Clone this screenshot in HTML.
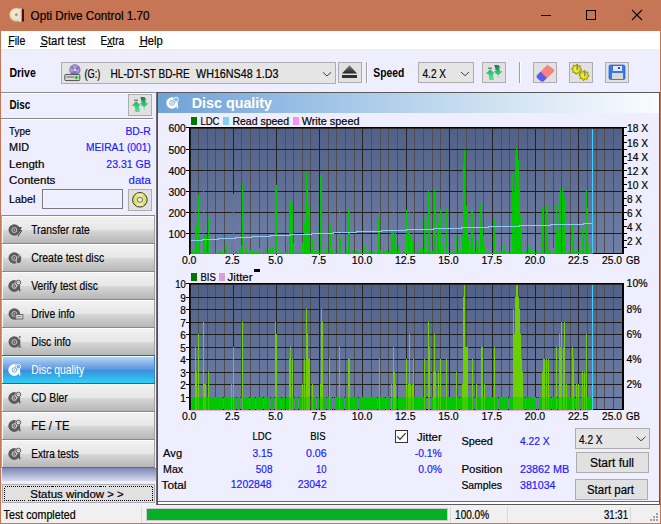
<!DOCTYPE html>
<html><head><meta charset="utf-8"><title>Opti Drive Control 1.70</title>
<style>
html,body{margin:0;padding:0;width:661px;height:524px;overflow:hidden;background:#EFEEFE}
svg{display:block;font-family:"Liberation Sans",sans-serif}
</style></head><body>
<svg width="661" height="524" viewBox="0 0 661 524" shape-rendering="crispEdges">
<rect x="0" y="0" width="661" height="524" fill="#EFEEFE" />
<rect x="0" y="0" width="661" height="31" fill="#C67655" />
<rect x="1" y="31" width="659" height="18" fill="#FFFFFF" />
<rect x="1" y="49" width="659" height="1" fill="#F0F0F0"/>
<rect x="1" y="50" width="659" height="1" fill="#EDEDED"/>
<rect x="0" y="0" width="1" height="524" fill="#C67655"/>
<rect x="660" y="0" width="1" height="524" fill="#C67655"/>
<rect x="0" y="523" width="661" height="1" fill="#C67655"/>
<defs>
<radialGradient id="cdg" cx="0.45" cy="0.45" r="0.6"><stop offset="0" stop-color="#FAF6E0"/><stop offset="0.5" stop-color="#F0E6C0"/><stop offset="1" stop-color="#D8CC98"/></radialGradient>
<radialGradient id="ycd" cx="0.5" cy="0.5" r="0.5"><stop offset="0" stop-color="#F0F0C0"/><stop offset="0.5" stop-color="#E4E480"/><stop offset="1" stop-color="#D4D470"/></radialGradient>
<linearGradient id="hdr" x1="0" y1="0" x2="1" y2="0"><stop offset="0" stop-color="#6FA2D6"/><stop offset="0.35" stop-color="#A2C5E7"/><stop offset="0.65" stop-color="#CCE0F1"/><stop offset="1" stop-color="#FAFCFE"/></linearGradient>
<linearGradient id="plot" x1="0" y1="0" x2="0" y2="1"><stop offset="0" stop-color="#516086"/><stop offset="1" stop-color="#7080A6"/></linearGradient>
<linearGradient id="btnTop" x1="0" y1="0" x2="0" y2="1"><stop offset="0" stop-color="#F2F2F2"/><stop offset="1" stop-color="#E6E6E6"/></linearGradient>
<linearGradient id="btnBot" x1="0" y1="0" x2="0" y2="1"><stop offset="0" stop-color="#D8D8D8"/><stop offset="1" stop-color="#B6B6B6"/></linearGradient>
<linearGradient id="selTop" x1="0" y1="0" x2="0" y2="1"><stop offset="0" stop-color="#B0D4F6"/><stop offset="1" stop-color="#5C92DC"/></linearGradient>
<linearGradient id="selBot" x1="0" y1="0" x2="0" y2="1"><stop offset="0" stop-color="#3C8CDC"/><stop offset="1" stop-color="#2CD2F8"/></linearGradient>
<linearGradient id="navEnd" x1="0" y1="0" x2="0" y2="1"><stop offset="0" stop-color="#7C86B4"/><stop offset="1" stop-color="#D6DAEE"/></linearGradient>
<linearGradient id="ej" x1="0" y1="0" x2="0" y2="1"><stop offset="0" stop-color="#808080"/><stop offset="1" stop-color="#202020"/></linearGradient>
<linearGradient id="garr" x1="0" y1="0" x2="0" y2="1"><stop offset="0" stop-color="#22B060"/><stop offset="1" stop-color="#5AE89A"/></linearGradient><linearGradient id="garr2" x1="0" y1="0" x2="0" y2="1"><stop offset="0" stop-color="#1A7040"/><stop offset="0.6" stop-color="#2AC070"/><stop offset="1" stop-color="#40D080"/></linearGradient>
</defs>
<circle cx="16.3" cy="14.7" r="6.8" fill="url(#cdg)" stroke="#C8B888" stroke-width="0.5" shape-rendering="auto"/>
<circle cx="16.3" cy="14.7" r="1.7" fill="#D07A58" stroke="#D8D8D8" stroke-width="0.9" shape-rendering="auto"/>
<rect x="18.8" y="8.8" width="2.8" height="12.8" rx="1.2" fill="#DADADA" stroke="#F4F4F4" stroke-width="0.5" shape-rendering="auto"/>
<path d="M21.7 10 Q22.8 7.8 23.9 9.5 L24 21.6 L21.7 21.6 Z" fill="#4A0808" shape-rendering="auto"/>
<text x="30.6" y="19.8" font-size="12" fill="#000" stroke="#000" stroke-width="0.2" textLength="119.0" lengthAdjust="spacingAndGlyphs">Opti Drive Control 1.70</text>
<rect x="541" y="15" width="10" height="1" fill="#000"/>
<rect x="586.5" y="10.5" width="9" height="9" fill="none" stroke="#000" stroke-width="1"/>
<path d="M632 10 L642 20 M642 10 L632 20" stroke="#000" stroke-width="1.1" shape-rendering="auto"/>
<text x="8.3" y="44.6" font-size="12" fill="#000" stroke="#000" stroke-width="0.2" textLength="17.0" lengthAdjust="spacingAndGlyphs">File</text>
<rect x="8" y="46" width="6" height="1" fill="#000"/>
<text x="40.5" y="44.6" font-size="12" fill="#000" stroke="#000" stroke-width="0.2" textLength="45.0" lengthAdjust="spacingAndGlyphs">Start test</text>
<rect x="40" y="46" width="7" height="1" fill="#000"/>
<text x="100.5" y="44.6" font-size="12" fill="#000" stroke="#000" stroke-width="0.2" textLength="23.7" lengthAdjust="spacingAndGlyphs">Extra</text>
<rect x="107" y="46" width="6" height="1" fill="#000"/>
<text x="139.7" y="44.6" font-size="12" fill="#000" stroke="#000" stroke-width="0.2" textLength="23.0" lengthAdjust="spacingAndGlyphs">Help</text>
<rect x="139" y="46" width="8" height="1" fill="#000"/>
<text x="9.4" y="76.9" font-size="12" fill="#000" font-weight="bold" textLength="26.4" lengthAdjust="spacingAndGlyphs">Drive</text>
<rect x="61.5" y="62.5" width="274" height="21" fill="#E5E5E5" stroke="#ADADAD"/>
<g shape-rendering="auto"><circle cx="74.9" cy="69.9" r="5.3" fill="#8C74C4" stroke="#6A58A0" stroke-width="0.5"/><path d="M74.9 69.9 L72 65.4 L77.5 65.3 Z M74.9 69.9 L70.5 73 L70 68 Z M74.9 69.9 L79.6 69 L78.4 73.8 Z" fill="#B8A8E0" opacity="0.8"/><circle cx="74.9" cy="69.9" r="1" fill="#F0F0FF"/><rect x="64.8" y="74.4" width="15" height="6.2" rx="1" fill="#D8D8D8" stroke="#404040" stroke-width="0.9"/><rect x="66.5" y="76.2" width="8" height="1.5" fill="#8A8A8A"/><path d="M76.5 75.8 v3.4 M74.8 77.5 h3.4" stroke="#10C020" stroke-width="1.3"/></g>
<text x="84.5" y="78.1" font-size="12" fill="#000" stroke="#000" stroke-width="0.2" textLength="15.9" lengthAdjust="spacingAndGlyphs">(G:)</text>
<text x="110.5" y="78.1" font-size="12" fill="#000" stroke="#000" stroke-width="0.2" textLength="79.3" lengthAdjust="spacingAndGlyphs">HL-DT-ST BD-RE</text>
<text x="196" y="78.1" font-size="12" fill="#000" stroke="#000" stroke-width="0.2" textLength="82.4" lengthAdjust="spacingAndGlyphs">WH16NS48 1.D3</text>
<path d="M322.8 72.2 L327 76 L331.2 72.2" fill="none" stroke="#404040" stroke-width="1" shape-rendering="auto"/>
<rect x="338.5" y="62.5" width="23" height="20" fill="#E1E1E1" stroke="#ADADAD"/>
<path d="M349.5 65.2 L357 73.6 L342 73.6 Z" fill="url(#ej)" shape-rendering="auto"/>
<rect x="342" y="75.3" width="15" height="2.6" fill="#303030" />
<rect x="366" y="62" width="1" height="21" fill="#A0A0A0"/>
<rect x="367" y="62" width="1" height="21" fill="#FFFFFF"/>
<text x="373.3" y="76.8" font-size="12" fill="#000" font-weight="bold" textLength="31.0" lengthAdjust="spacingAndGlyphs">Speed</text>
<rect x="418.5" y="62.5" width="55" height="20" fill="#E5E5E5" stroke="#ADADAD"/>
<text x="422.5" y="77.5" font-size="12" fill="#000" stroke="#000" stroke-width="0.2" textLength="23.5" lengthAdjust="spacingAndGlyphs">4.2 X</text>
<path d="M461 72 L465 75.7 L469 72" fill="none" stroke="#404040" stroke-width="1" shape-rendering="auto"/>
<rect x="482.5" y="62.5" width="23" height="20" fill="#E1E1E1" stroke="#ADADAD"/>
<g transform="translate(482,62)" shape-rendering="auto"><path d="M8.2 7.2 L12.8 11.8 L10.8 11.8 L12 18 L8.2 18 L6.2 11.8 L3.6 11.8 Z" fill="url(#garr)"/><path d="M12.4 3 L16.8 3.2 L18 9.2 L20.4 9.2 L16.2 13.6 L11.6 9.2 L13.8 9.2 Z" fill="url(#garr2)"/><path d="M6 6.2 h4" stroke="#404040" stroke-width="0.9"/><path d="M13.5 3 l0.8 1.6 M17.4 4.2 l0.8 1.6 M15.8 14.6 l0.8 0.6 M7.4 16 l0.8 1.6" stroke="#505050" stroke-width="0.6"/></g>
<rect x="519" y="62" width="1" height="21" fill="#A0A0A0"/>
<rect x="520" y="62" width="1" height="21" fill="#FFFFFF"/>
<rect x="533.5" y="62.5" width="23" height="20" fill="#E1E1E1" stroke="#ADADAD"/>
<path d="M540.5 72 L547.5 65.2 L553.5 69.5 L553.5 71.5 L546.5 78.2 Z" fill="#FF8080" stroke="#D05050" stroke-width="0.4" shape-rendering="auto"/>
<path d="M537 75.5 L540.5 72 L546.5 78.2 L543 81.5 L540 80.5 L537 77.5 Z" fill="#5A5AF8" stroke="#3030B0" stroke-width="0.4" shape-rendering="auto"/>
<rect x="569.5" y="62.5" width="23" height="20" fill="#E1E1E1" stroke="#ADADAD"/>
<polygon points="581.60,69.20 581.50,70.18 579.93,70.58 579.59,71.20 580.14,72.74 579.38,73.36 577.98,72.53 577.30,72.73 576.60,74.20 575.62,74.10 575.22,72.53 574.60,72.19 573.06,72.74 572.44,71.98 573.27,70.58 573.07,69.90 571.60,69.20 571.70,68.22 573.27,67.82 573.61,67.20 573.06,65.66 573.82,65.04 575.22,65.87 575.90,65.67 576.60,64.20 577.58,64.30 577.98,65.87 578.60,66.21 580.14,65.66 580.76,66.42 579.93,67.82 580.13,68.50" fill="#E8E800" stroke="#6A6A00" stroke-width="0.7" shape-rendering="auto"/>
<circle cx="576.6" cy="69.2" r="2.2" fill="#F8F820" shape-rendering="auto"/>
<rect x="576.4" y="65.2" width="1.8" height="5" fill="#8A8A8A" shape-rendering="auto"/>
<polygon points="589.00,75.40 588.90,76.38 587.33,76.78 586.99,77.40 587.54,78.94 586.78,79.56 585.38,78.73 584.70,78.93 584.00,80.40 583.02,80.30 582.62,78.73 582.00,78.39 580.46,78.94 579.84,78.18 580.67,76.78 580.47,76.10 579.00,75.40 579.10,74.42 580.67,74.02 581.01,73.40 580.46,71.86 581.22,71.24 582.62,72.07 583.30,71.87 584.00,70.40 584.98,70.50 585.38,72.07 586.00,72.41 587.54,71.86 588.16,72.62 587.33,74.02 587.53,74.70" fill="#E8E800" stroke="#6A6A00" stroke-width="0.7" shape-rendering="auto"/>
<circle cx="584.0" cy="75.4" r="2.2" fill="#F8F820" shape-rendering="auto"/>
<rect x="583.8" y="71.4" width="1.8" height="5" fill="#8A8A8A" shape-rendering="auto"/>
<rect x="605.5" y="62.5" width="23" height="20" fill="#E1E1E1" stroke="#ADADAD"/>
<rect x="609" y="65" width="16" height="14.5" rx="1.5" fill="#3A78F0" stroke="#1E50C0" stroke-width="0.6" shape-rendering="auto"/>
<rect x="612.5" y="66" width="9" height="5" fill="#E8E8F0" />
<rect x="617.5" y="67" width="2" height="2" fill="#2050D0" />
<rect x="611.5" y="73" width="11" height="5.5" fill="#D8D8D8" />
<rect x="1" y="92" width="155" height="1" fill="#A0A0A0"/>
<rect x="1" y="92" width="152" height="1" fill="#8A8A8A"/>
<rect x="1" y="93" width="152" height="1" fill="#FFFFFF"/>
<text x="9.4" y="109.2" font-size="12" fill="#000" font-weight="bold" textLength="20.8" lengthAdjust="spacingAndGlyphs">Disc</text>
<rect x="128.5" y="94.5" width="23" height="21" fill="#E1E1E1" stroke="#ADADAD"/>
<g transform="translate(128,94)" shape-rendering="auto"><path d="M8.2 7.2 L12.8 11.8 L10.8 11.8 L12 18 L8.2 18 L6.2 11.8 L3.6 11.8 Z" fill="url(#garr)"/><path d="M12.4 3 L16.8 3.2 L18 9.2 L20.4 9.2 L16.2 13.6 L11.6 9.2 L13.8 9.2 Z" fill="url(#garr2)"/><path d="M6 6.2 h4" stroke="#404040" stroke-width="0.9"/><path d="M13.5 3 l0.8 1.6 M17.4 4.2 l0.8 1.6 M15.8 14.6 l0.8 0.6 M7.4 16 l0.8 1.6" stroke="#505050" stroke-width="0.6"/></g>
<rect x="1" y="118" width="152" height="1" fill="#8A8A8A"/>
<rect x="1" y="119" width="152" height="1" fill="#FFFFFF"/>
<text x="9.1" y="134.9" font-size="11.5" fill="#000" stroke="#000" stroke-width="0.2" textLength="21.4" lengthAdjust="spacingAndGlyphs">Type</text>
<text x="125.4" y="134.9" font-size="11.5" fill="#1C1CFF" stroke="#1C1CFF" stroke-width="0.2" textLength="25.4" lengthAdjust="spacingAndGlyphs">BD-R</text>
<text x="9.1" y="150.9" font-size="11.5" fill="#000" stroke="#000" stroke-width="0.2" textLength="19.9" lengthAdjust="spacingAndGlyphs">MID</text>
<text x="86.0" y="150.9" font-size="11.5" fill="#1C1CFF" stroke="#1C1CFF" stroke-width="0.2" textLength="64.8" lengthAdjust="spacingAndGlyphs">MEIRA1 (001)</text>
<text x="9.1" y="167.5" font-size="11.5" fill="#000" stroke="#000" stroke-width="0.2" textLength="35.4" lengthAdjust="spacingAndGlyphs">Length</text>
<text x="106.3" y="167.5" font-size="11.5" fill="#1C1CFF" stroke="#1C1CFF" stroke-width="0.2" textLength="44.5" lengthAdjust="spacingAndGlyphs">23.31 GB</text>
<text x="9.1" y="183.5" font-size="11.5" fill="#000" stroke="#000" stroke-width="0.2" textLength="46.3" lengthAdjust="spacingAndGlyphs">Contents</text>
<text x="128.6" y="183.5" font-size="11.5" fill="#1C1CFF" stroke="#1C1CFF" stroke-width="0.2" textLength="22.2" lengthAdjust="spacingAndGlyphs">data</text>
<text x="9.1" y="202.6" font-size="11.5" fill="#000" stroke="#000" stroke-width="0.2" textLength="26.3" lengthAdjust="spacingAndGlyphs">Label</text>
<rect x="42.5" y="189.5" width="80" height="19" fill="#EFEEFE" stroke="#7A7A7A"/>
<rect x="43.5" y="190.5" width="78" height="17" fill="none" stroke="#FFFFFF" stroke-width="0.6" opacity="0.6"/>
<rect x="128.5" y="189.5" width="23" height="20.5" fill="#E1E1E1" stroke="#ADADAD"/>
<circle cx="139.9" cy="199.8" r="7.3" fill="url(#ycd)" stroke="#3A3A20" stroke-width="1" shape-rendering="auto"/>
<path d="M139.9 199.8 L136 193.5 L143.8 193.5 Z M139.9 199.8 L136 206.1 L143.8 206.1 Z" fill="#F4F4C0" opacity="0.7" shape-rendering="auto"/>
<circle cx="139.9" cy="199.8" r="2.6" fill="#E0F0D8" stroke="#606060" stroke-width="0.9" shape-rendering="auto"/>
<rect x="1" y="215" width="1" height="253" fill="#A8A8A8"/>
<rect x="2" y="215" width="153" height="1" fill="#8A8A8A"/>
<rect x="2" y="216" width="153" height="1" fill="#FFFFFF"/>
<rect x="2" y="217" width="153" height="13" fill="url(#btnTop)" />
<rect x="2" y="230" width="153" height="13" fill="url(#btnBot)" />
<rect x="2" y="216" width="1" height="27" fill="#FFFFFF"/>
<rect x="154" y="216" width="1" height="27" fill="#A0A0A0"/>
<g shape-rendering="auto"><circle cx="14.3" cy="230" r="5.8" fill="#5C5C5C"/><circle cx="14.3" cy="230" r="2.5" fill="none" stroke="#D0D0D0" stroke-width="0.9"/><circle cx="14.3" cy="230" r="0.8" fill="#D0D0D0"/><path d="M18.3 228 L21.3 227.5 L19.3 231 L21.8 230.5 L17.8 236.5" fill="none" stroke="#404040" stroke-width="1"/><path d="M17.3 224 L21.3 224 L21.3 232 L17.3 232 Z" fill="#EAEAEA" opacity="0"/></g>
<text x="31.2" y="233.8" font-size="12" fill="#000" stroke="#000" stroke-width="0.15" textLength="58.6" lengthAdjust="spacingAndGlyphs">Transfer rate</text>
<rect x="2" y="243" width="153" height="1" fill="#8A8A8A"/>
<rect x="2" y="244" width="153" height="1" fill="#FFFFFF"/>
<rect x="2" y="245" width="153" height="13" fill="url(#btnTop)" />
<rect x="2" y="258" width="153" height="13" fill="url(#btnBot)" />
<rect x="2" y="244" width="1" height="27" fill="#FFFFFF"/>
<rect x="154" y="244" width="1" height="27" fill="#A0A0A0"/>
<g shape-rendering="auto"><circle cx="14.3" cy="258" r="5.8" fill="#5C5C5C"/><circle cx="14.3" cy="258" r="2.5" fill="none" stroke="#D0D0D0" stroke-width="0.9"/><circle cx="14.3" cy="258" r="0.8" fill="#D0D0D0"/><path d="M16.3 259 Q20.8 256 19.3 253 Q22.8 257 21.3 262 Q19.3 265 16.3 263 Z" fill="#5C5C5C" stroke="#E0E0E0" stroke-width="0.8"/></g>
<text x="31.2" y="261.8" font-size="12" fill="#000" stroke="#000" stroke-width="0.15" textLength="73.0" lengthAdjust="spacingAndGlyphs">Create test disc</text>
<rect x="2" y="271" width="153" height="1" fill="#8A8A8A"/>
<rect x="2" y="272" width="153" height="1" fill="#FFFFFF"/>
<rect x="2" y="273" width="153" height="13" fill="url(#btnTop)" />
<rect x="2" y="286" width="153" height="13" fill="url(#btnBot)" />
<rect x="2" y="272" width="1" height="27" fill="#FFFFFF"/>
<rect x="154" y="272" width="1" height="27" fill="#A0A0A0"/>
<g shape-rendering="auto"><circle cx="14.3" cy="286" r="5.8" fill="#5C5C5C"/><circle cx="14.3" cy="286" r="2.5" fill="none" stroke="#D0D0D0" stroke-width="0.9"/><circle cx="14.3" cy="286" r="0.8" fill="#D0D0D0"/></g>
<g shape-rendering="auto"><circle cx="14.3" cy="286" r="5.8" fill="#5C5C5C"/><circle cx="14.3" cy="286" r="2.3" fill="none" stroke="#E4E4E4" stroke-width="0.9"/><circle cx="14.3" cy="286" r="0.8" fill="#E4E4E4"/><circle cx="18.4" cy="282.5" r="3.1" fill="#E4E4E4"/><circle cx="18.4" cy="282.5" r="2.3" fill="#E4E4E4" stroke="#5C5C5C" stroke-width="1"/><path d="M17.3 282.6 l0.8 -0.8 l0.8 0.8 l0.8 -0.8" fill="none" stroke="#5C5C5C" stroke-width="0.5"/><path d="M19.0 285 L19.9 291.3" stroke="#5C5C5C" stroke-width="1.4"/></g>
<text x="31.2" y="289.8" font-size="12" fill="#000" stroke="#000" stroke-width="0.15" textLength="66.8" lengthAdjust="spacingAndGlyphs">Verify test disc</text>
<rect x="2" y="299" width="153" height="1" fill="#8A8A8A"/>
<rect x="2" y="300" width="153" height="1" fill="#FFFFFF"/>
<rect x="2" y="301" width="153" height="13" fill="url(#btnTop)" />
<rect x="2" y="314" width="153" height="13" fill="url(#btnBot)" />
<rect x="2" y="300" width="1" height="27" fill="#FFFFFF"/>
<rect x="154" y="300" width="1" height="27" fill="#A0A0A0"/>
<g shape-rendering="auto"><circle cx="14.3" cy="314" r="5.8" fill="#5C5C5C"/><circle cx="14.3" cy="314" r="2.5" fill="none" stroke="#D0D0D0" stroke-width="0.9"/><circle cx="14.3" cy="314" r="0.8" fill="#D0D0D0"/><rect x="15.8" y="314.5" width="7" height="4.5" fill="#E6E6E6" stroke="#5C5C5C" stroke-width="0.9"/><path d="M17.3 316.7 h4" stroke="#5C5C5C" stroke-width="0.8"/></g>
<text x="31.2" y="317.8" font-size="12" fill="#000" stroke="#000" stroke-width="0.15" textLength="43.6" lengthAdjust="spacingAndGlyphs">Drive info</text>
<rect x="2" y="327" width="153" height="1" fill="#8A8A8A"/>
<rect x="2" y="328" width="153" height="1" fill="#FFFFFF"/>
<rect x="2" y="329" width="153" height="13" fill="url(#btnTop)" />
<rect x="2" y="342" width="153" height="13" fill="url(#btnBot)" />
<rect x="2" y="328" width="1" height="27" fill="#FFFFFF"/>
<rect x="154" y="328" width="1" height="27" fill="#A0A0A0"/>
<g shape-rendering="auto"><circle cx="14.3" cy="342" r="5.8" fill="#5C5C5C"/><circle cx="14.3" cy="342" r="2.5" fill="none" stroke="#D0D0D0" stroke-width="0.9"/><circle cx="14.3" cy="342" r="0.8" fill="#D0D0D0"/><path d="M19.5 339.5 v7" stroke="#5C5C5C" stroke-width="1.6"/><path d="M17.8 347 h3.5" stroke="#5C5C5C" stroke-width="1"/><circle cx="19.8" cy="337" r="0.9" fill="#5C5C5C"/><path d="M18.3 339 l1 -0.5" stroke="#E8E8E8" stroke-width="0.6"/></g>
<text x="31.2" y="345.8" font-size="12" fill="#000" stroke="#000" stroke-width="0.15" textLength="39.6" lengthAdjust="spacingAndGlyphs">Disc info</text>
<rect x="2" y="355" width="153" height="1" fill="#5A5A5A"/>
<rect x="2" y="356" width="153" height="1" fill="#E8FFFF"/>
<rect x="2" y="357" width="153" height="13" fill="url(#selTop)" />
<rect x="2" y="370" width="153" height="13" fill="url(#selBot)" />
<rect x="2" y="356" width="1" height="27" fill="#E8FFFF"/>
<rect x="154" y="356" width="1" height="27" fill="#3A80C8"/>
<g shape-rendering="auto"><circle cx="14.3" cy="370" r="5.8" fill="#FFFFFF"/><circle cx="14.3" cy="370" r="2.5" fill="none" stroke="#5A94DC" stroke-width="0.9"/><circle cx="14.3" cy="370" r="0.8" fill="#5A94DC"/></g>
<g shape-rendering="auto"><circle cx="14.3" cy="370" r="5.8" fill="#FFFFFF"/><circle cx="14.3" cy="370" r="2.3" fill="none" stroke="#6CA2E0" stroke-width="0.9"/><circle cx="14.3" cy="370" r="0.8" fill="#6CA2E0"/><circle cx="18.4" cy="366.5" r="3.1" fill="#6CA2E0"/><circle cx="18.4" cy="366.5" r="2.3" fill="#6CA2E0" stroke="#FFFFFF" stroke-width="1"/><path d="M17.3 366.6 l0.8 -0.8 l0.8 0.8 l0.8 -0.8" fill="none" stroke="#FFFFFF" stroke-width="0.5"/><path d="M19.0 369 L19.9 375.3" stroke="#FFFFFF" stroke-width="1.4"/></g>
<text x="31.2" y="373.8" font-size="12" fill="#FFFFFF" stroke="#FFFFFF" stroke-width="0.05" textLength="53.0" lengthAdjust="spacingAndGlyphs">Disc quality</text>
<rect x="2" y="383" width="153" height="1" fill="#5A5A5A"/>
<rect x="2" y="384" width="153" height="1" fill="#FFFFFF"/>
<rect x="2" y="385" width="153" height="13" fill="url(#btnTop)" />
<rect x="2" y="398" width="153" height="13" fill="url(#btnBot)" />
<rect x="2" y="384" width="1" height="27" fill="#FFFFFF"/>
<rect x="154" y="384" width="1" height="27" fill="#A0A0A0"/>
<g shape-rendering="auto"><circle cx="14.3" cy="398" r="5.8" fill="#5C5C5C"/><circle cx="14.3" cy="398" r="2.5" fill="none" stroke="#D0D0D0" stroke-width="0.9"/><circle cx="14.3" cy="398" r="0.8" fill="#D0D0D0"/></g>
<g shape-rendering="auto"><circle cx="14.3" cy="398" r="5.8" fill="#5C5C5C"/><circle cx="14.3" cy="398" r="2.3" fill="none" stroke="#E4E4E4" stroke-width="0.9"/><circle cx="14.3" cy="398" r="0.8" fill="#E4E4E4"/><circle cx="18.4" cy="394.5" r="3.1" fill="#E4E4E4"/><circle cx="18.4" cy="394.5" r="2.3" fill="#E4E4E4" stroke="#5C5C5C" stroke-width="1"/><path d="M17.3 394.6 l0.8 -0.8 l0.8 0.8 l0.8 -0.8" fill="none" stroke="#5C5C5C" stroke-width="0.5"/><path d="M19.0 397 L19.9 403.3" stroke="#5C5C5C" stroke-width="1.4"/></g>
<text x="31.2" y="401.8" font-size="12" fill="#000" stroke="#000" stroke-width="0.15" textLength="36.6" lengthAdjust="spacingAndGlyphs">CD Bler</text>
<rect x="2" y="411" width="153" height="1" fill="#8A8A8A"/>
<rect x="2" y="412" width="153" height="1" fill="#FFFFFF"/>
<rect x="2" y="413" width="153" height="13" fill="url(#btnTop)" />
<rect x="2" y="426" width="153" height="13" fill="url(#btnBot)" />
<rect x="2" y="412" width="1" height="27" fill="#FFFFFF"/>
<rect x="154" y="412" width="1" height="27" fill="#A0A0A0"/>
<g shape-rendering="auto"><circle cx="14.3" cy="426" r="5.8" fill="#5C5C5C"/><circle cx="14.3" cy="426" r="2.5" fill="none" stroke="#D0D0D0" stroke-width="0.9"/><circle cx="14.3" cy="426" r="0.8" fill="#D0D0D0"/></g>
<g shape-rendering="auto"><circle cx="14.3" cy="426" r="5.8" fill="#5C5C5C"/><circle cx="14.3" cy="426" r="2.3" fill="none" stroke="#E4E4E4" stroke-width="0.9"/><circle cx="14.3" cy="426" r="0.8" fill="#E4E4E4"/><circle cx="18.4" cy="422.5" r="3.1" fill="#E4E4E4"/><circle cx="18.4" cy="422.5" r="2.3" fill="#E4E4E4" stroke="#5C5C5C" stroke-width="1"/><path d="M17.3 422.6 l0.8 -0.8 l0.8 0.8 l0.8 -0.8" fill="none" stroke="#5C5C5C" stroke-width="0.5"/><path d="M19.0 425 L19.9 431.3" stroke="#5C5C5C" stroke-width="1.4"/></g>
<text x="31.2" y="429.8" font-size="12" fill="#000" stroke="#000" stroke-width="0.15" textLength="38.3" lengthAdjust="spacingAndGlyphs">FE / TE</text>
<rect x="2" y="439" width="153" height="1" fill="#8A8A8A"/>
<rect x="2" y="440" width="153" height="1" fill="#FFFFFF"/>
<rect x="2" y="441" width="153" height="13" fill="url(#btnTop)" />
<rect x="2" y="454" width="153" height="13" fill="url(#btnBot)" />
<rect x="2" y="440" width="1" height="27" fill="#FFFFFF"/>
<rect x="154" y="440" width="1" height="27" fill="#A0A0A0"/>
<g shape-rendering="auto"><circle cx="14.3" cy="454" r="5.8" fill="#5C5C5C"/><circle cx="14.3" cy="454" r="2.5" fill="none" stroke="#D0D0D0" stroke-width="0.9"/><circle cx="14.3" cy="454" r="0.8" fill="#D0D0D0"/></g>
<g shape-rendering="auto"><circle cx="14.3" cy="454" r="5.8" fill="#5C5C5C"/><circle cx="14.3" cy="454" r="2.3" fill="none" stroke="#E4E4E4" stroke-width="0.9"/><circle cx="14.3" cy="454" r="0.8" fill="#E4E4E4"/><circle cx="18.4" cy="450.5" r="3.1" fill="#E4E4E4"/><circle cx="18.4" cy="450.5" r="2.3" fill="#E4E4E4" stroke="#5C5C5C" stroke-width="1"/><path d="M17.3 450.6 l0.8 -0.8 l0.8 0.8 l0.8 -0.8" fill="none" stroke="#5C5C5C" stroke-width="0.5"/><path d="M19.0 453 L19.9 459.3" stroke="#5C5C5C" stroke-width="1.4"/></g>
<text x="31.2" y="457.8" font-size="12" fill="#000" stroke="#000" stroke-width="0.15" textLength="47.7" lengthAdjust="spacingAndGlyphs">Extra tests</text>
<rect x="2" y="467" width="153" height="1" fill="#6A6A6A"/>
<rect x="2" y="468" width="154" height="13" fill="url(#navEnd)" />
<rect x="2.5" y="484.5" width="152" height="18" fill="#E1E1E1" stroke="#ADADAD"/>
<rect x="4.5" y="486.5" width="148" height="14" fill="none" stroke="#000" stroke-width="1" stroke-dasharray="1 1"/>
<text x="30.3" y="497.8" font-size="11.2" fill="#000" stroke="#000" stroke-width="0.2" textLength="93.5" lengthAdjust="spacingAndGlyphs">Status window &gt; &gt;</text>
<rect x="156" y="92" width="1" height="413" fill="#6E6E6E"/>
<rect x="157" y="92" width="1" height="413" fill="#505050"/>
<rect x="156" y="92" width="504" height="1" fill="#5A5A5A"/>
<rect x="659" y="92" width="1" height="413" fill="#5A5A5A"/>
<rect x="158" y="501" width="501" height="1" fill="#6A6A6A"/>
<rect x="158" y="502" width="501" height="1" fill="#FFFFFF"/>
<rect x="158" y="503" width="501" height="1" fill="#FFFFFF"/>
<rect x="156" y="504" width="504" height="1" fill="#5A5A5A"/>
<rect x="158" y="93" width="501" height="20" fill="url(#hdr)" />
<g shape-rendering="auto"><circle cx="172" cy="103" r="5.7" fill="#FFFFFF"/><circle cx="172" cy="103" r="2.3" fill="none" stroke="#74A6D8" stroke-width="0.9"/><circle cx="172" cy="103" r="0.8" fill="#74A6D8"/><circle cx="176.1" cy="99.5" r="3.1" fill="#74A6D8"/><circle cx="176.1" cy="99.5" r="2.3" fill="#74A6D8" stroke="#FFFFFF" stroke-width="1"/><path d="M175 99.6 l0.8 -0.8 l0.8 0.8 l0.8 -0.8" fill="none" stroke="#FFFFFF" stroke-width="0.5"/><path d="M176.7 102 L177.6 108.3" stroke="#FFFFFF" stroke-width="1.4"/></g>
<text x="191.8" y="107.6" font-size="14" fill="#FFFFFF" font-weight="bold" textLength="80.2" lengthAdjust="spacingAndGlyphs">Disc quality</text>
<rect x="190" y="127" width="432" height="127" fill="url(#plot)" />
<rect x="198" y="127" width="1" height="127" fill="#4E4E4E"/>
<rect x="207" y="127" width="1" height="127" fill="#4E4E4E"/>
<rect x="215" y="127" width="1" height="127" fill="#4E4E4E"/>
<rect x="224" y="127" width="1" height="127" fill="#4E4E4E"/>
<rect x="241" y="127" width="1" height="127" fill="#4E4E4E"/>
<rect x="250" y="127" width="1" height="127" fill="#4E4E4E"/>
<rect x="259" y="127" width="1" height="127" fill="#4E4E4E"/>
<rect x="267" y="127" width="1" height="127" fill="#4E4E4E"/>
<rect x="285" y="127" width="1" height="127" fill="#4E4E4E"/>
<rect x="293" y="127" width="1" height="127" fill="#4E4E4E"/>
<rect x="302" y="127" width="1" height="127" fill="#4E4E4E"/>
<rect x="310" y="127" width="1" height="127" fill="#4E4E4E"/>
<rect x="328" y="127" width="1" height="127" fill="#4E4E4E"/>
<rect x="336" y="127" width="1" height="127" fill="#4E4E4E"/>
<rect x="345" y="127" width="1" height="127" fill="#4E4E4E"/>
<rect x="354" y="127" width="1" height="127" fill="#4E4E4E"/>
<rect x="371" y="127" width="1" height="127" fill="#4E4E4E"/>
<rect x="380" y="127" width="1" height="127" fill="#4E4E4E"/>
<rect x="388" y="127" width="1" height="127" fill="#4E4E4E"/>
<rect x="397" y="127" width="1" height="127" fill="#4E4E4E"/>
<rect x="414" y="127" width="1" height="127" fill="#4E4E4E"/>
<rect x="423" y="127" width="1" height="127" fill="#4E4E4E"/>
<rect x="432" y="127" width="1" height="127" fill="#4E4E4E"/>
<rect x="440" y="127" width="1" height="127" fill="#4E4E4E"/>
<rect x="457" y="127" width="1" height="127" fill="#4E4E4E"/>
<rect x="466" y="127" width="1" height="127" fill="#4E4E4E"/>
<rect x="475" y="127" width="1" height="127" fill="#4E4E4E"/>
<rect x="483" y="127" width="1" height="127" fill="#4E4E4E"/>
<rect x="501" y="127" width="1" height="127" fill="#4E4E4E"/>
<rect x="509" y="127" width="1" height="127" fill="#4E4E4E"/>
<rect x="518" y="127" width="1" height="127" fill="#4E4E4E"/>
<rect x="527" y="127" width="1" height="127" fill="#4E4E4E"/>
<rect x="544" y="127" width="1" height="127" fill="#4E4E4E"/>
<rect x="553" y="127" width="1" height="127" fill="#4E4E4E"/>
<rect x="561" y="127" width="1" height="127" fill="#4E4E4E"/>
<rect x="570" y="127" width="1" height="127" fill="#4E4E4E"/>
<rect x="587" y="127" width="1" height="127" fill="#4E4E4E"/>
<rect x="596" y="127" width="1" height="127" fill="#4E4E4E"/>
<rect x="604" y="127" width="1" height="127" fill="#4E4E4E"/>
<rect x="613" y="127" width="1" height="127" fill="#4E4E4E"/>
<rect x="233" y="127" width="1" height="127" fill="#242424"/>
<rect x="276" y="127" width="1" height="127" fill="#242424"/>
<rect x="319" y="127" width="1" height="127" fill="#242424"/>
<rect x="362" y="127" width="1" height="127" fill="#242424"/>
<rect x="406" y="127" width="1" height="127" fill="#242424"/>
<rect x="449" y="127" width="1" height="127" fill="#242424"/>
<rect x="492" y="127" width="1" height="127" fill="#242424"/>
<rect x="535" y="127" width="1" height="127" fill="#242424"/>
<rect x="578" y="127" width="1" height="127" fill="#242424"/>
<rect x="190" y="149" width="432" height="1" fill="#1E1E1E"/>
<rect x="190" y="170" width="432" height="1" fill="#1E1E1E"/>
<rect x="190" y="191" width="432" height="1" fill="#1E1E1E"/>
<rect x="190" y="212" width="432" height="1" fill="#1E1E1E"/>
<rect x="190" y="233" width="432" height="1" fill="#1E1E1E"/>
<rect x="189" y="253" width="435" height="1" fill="#000000"/>
<path d="M190 253h1v1h-1zM191 252h1v2h-1zM192 250h1v4h-1zM193 253h1v1h-1zM194 252h1v2h-1zM195 252h1v2h-1zM196 253h1v1h-1zM197 252h1v2h-1zM198 252h1v2h-1zM199 251h1v3h-1zM200 253h1v1h-1zM201 253h1v1h-1zM202 253h1v1h-1zM203 251h1v3h-1zM204 252h1v2h-1zM205 253h1v1h-1zM206 246h1v8h-1zM207 252h1v2h-1zM208 252h1v2h-1zM209 253h1v1h-1zM210 253h1v1h-1zM211 252h1v2h-1zM212 253h1v1h-1zM213 253h1v1h-1zM214 253h1v1h-1zM215 253h1v1h-1zM216 253h1v1h-1zM217 253h1v1h-1zM218 251h1v3h-1zM219 252h1v2h-1zM220 252h1v2h-1zM221 253h1v1h-1zM222 252h1v2h-1zM223 253h1v1h-1zM224 253h1v1h-1zM225 249h1v5h-1zM226 252h1v2h-1zM227 253h1v1h-1zM228 253h1v1h-1zM229 253h1v1h-1zM230 253h1v1h-1zM231 251h1v3h-1zM232 253h1v1h-1zM233 251h1v3h-1zM234 253h1v1h-1zM235 250h1v4h-1zM236 251h1v3h-1zM237 253h1v1h-1zM238 253h1v1h-1zM239 250h1v4h-1zM240 253h1v1h-1zM241 246h1v8h-1zM242 253h1v1h-1zM243 252h1v2h-1zM244 253h1v1h-1zM245 252h1v2h-1zM246 253h1v1h-1zM247 253h1v1h-1zM248 253h1v1h-1zM249 253h1v1h-1zM250 250h1v4h-1zM251 253h1v1h-1zM252 252h1v2h-1zM253 253h1v1h-1zM254 253h1v1h-1zM255 253h1v1h-1zM256 252h1v2h-1zM257 253h1v1h-1zM258 252h1v2h-1zM259 248h1v6h-1zM260 253h1v1h-1zM261 253h1v1h-1zM262 253h1v1h-1zM263 249h1v5h-1zM264 253h1v1h-1zM265 247h1v7h-1zM266 249h1v5h-1zM267 253h1v1h-1zM268 253h1v1h-1zM269 251h1v3h-1zM270 252h1v2h-1zM271 253h1v1h-1zM272 248h1v6h-1zM273 253h1v1h-1zM274 253h1v1h-1zM275 252h1v2h-1zM276 251h1v3h-1zM277 253h1v1h-1zM278 253h1v1h-1zM279 253h1v1h-1zM280 252h1v2h-1zM281 253h1v1h-1zM282 253h1v1h-1zM283 252h1v2h-1zM284 253h1v1h-1zM285 252h1v2h-1zM286 251h1v3h-1zM287 253h1v1h-1zM288 253h1v1h-1zM289 252h1v2h-1zM290 253h1v1h-1zM291 253h1v1h-1zM292 252h1v2h-1zM293 252h1v2h-1zM294 253h1v1h-1zM295 252h1v2h-1zM296 252h1v2h-1zM297 252h1v2h-1zM298 253h1v1h-1zM299 253h1v1h-1zM300 253h1v1h-1zM301 253h1v1h-1zM302 253h1v1h-1zM303 252h1v2h-1zM304 253h1v1h-1zM305 252h1v2h-1zM306 253h1v1h-1zM307 253h1v1h-1zM308 250h1v4h-1zM309 253h1v1h-1zM310 252h1v2h-1zM311 250h1v4h-1zM312 248h1v6h-1zM313 253h1v1h-1zM314 252h1v2h-1zM315 251h1v3h-1zM316 252h1v2h-1zM317 253h1v1h-1zM318 250h1v4h-1zM319 253h1v1h-1zM320 253h1v1h-1zM321 253h1v1h-1zM322 253h1v1h-1zM323 253h1v1h-1zM324 253h1v1h-1zM325 253h1v1h-1zM326 252h1v2h-1zM327 253h1v1h-1zM328 253h1v1h-1zM329 251h1v3h-1zM330 248h1v6h-1zM331 252h1v2h-1zM332 250h1v4h-1zM333 253h1v1h-1zM334 253h1v1h-1zM335 253h1v1h-1zM336 253h1v1h-1zM337 252h1v2h-1zM338 253h1v1h-1zM339 253h1v1h-1zM340 253h1v1h-1zM341 253h1v1h-1zM342 253h1v1h-1zM343 253h1v1h-1zM344 253h1v1h-1zM345 253h1v1h-1zM346 250h1v4h-1zM347 252h1v2h-1zM348 253h1v1h-1zM349 247h1v7h-1zM350 253h1v1h-1zM351 252h1v2h-1zM352 250h1v4h-1zM353 251h1v3h-1zM354 253h1v1h-1zM355 251h1v3h-1zM356 251h1v3h-1zM357 252h1v2h-1zM358 252h1v2h-1zM359 253h1v1h-1zM360 252h1v2h-1zM361 252h1v2h-1zM362 253h1v1h-1zM363 252h1v2h-1zM364 246h1v8h-1zM365 252h1v2h-1zM366 253h1v1h-1zM367 252h1v2h-1zM368 252h1v2h-1zM369 253h1v1h-1zM370 251h1v3h-1zM371 253h1v1h-1zM372 251h1v3h-1zM373 253h1v1h-1zM374 252h1v2h-1zM375 253h1v1h-1zM376 253h1v1h-1zM377 252h1v2h-1zM378 253h1v1h-1zM379 252h1v2h-1zM380 250h1v4h-1zM381 253h1v1h-1zM382 253h1v1h-1zM383 253h1v1h-1zM384 252h1v2h-1zM385 253h1v1h-1zM386 253h1v1h-1zM387 250h1v4h-1zM388 252h1v2h-1zM389 253h1v1h-1zM390 251h1v3h-1zM391 253h1v1h-1zM392 252h1v2h-1zM393 253h1v1h-1zM394 253h1v1h-1zM395 251h1v3h-1zM396 250h1v4h-1zM397 251h1v3h-1zM398 253h1v1h-1zM399 252h1v2h-1zM400 253h1v1h-1zM401 253h1v1h-1zM402 253h1v1h-1zM403 251h1v3h-1zM404 251h1v3h-1zM405 252h1v2h-1zM406 250h1v4h-1zM407 253h1v1h-1zM408 253h1v1h-1zM409 253h1v1h-1zM410 253h1v1h-1zM411 253h1v1h-1zM412 253h1v1h-1zM413 252h1v2h-1zM414 253h1v1h-1zM415 253h1v1h-1zM416 251h1v3h-1zM417 246h1v8h-1zM418 253h1v1h-1zM419 251h1v3h-1zM420 253h1v1h-1zM421 252h1v2h-1zM422 252h1v2h-1zM423 253h1v1h-1zM424 253h1v1h-1zM425 252h1v2h-1zM426 252h1v2h-1zM427 252h1v2h-1zM428 253h1v1h-1zM429 253h1v1h-1zM430 251h1v3h-1zM431 253h1v1h-1zM432 251h1v3h-1zM433 251h1v3h-1zM434 249h1v5h-1zM435 253h1v1h-1zM436 252h1v2h-1zM437 252h1v2h-1zM438 251h1v3h-1zM439 250h1v4h-1zM440 252h1v2h-1zM441 253h1v1h-1zM442 253h1v1h-1zM443 253h1v1h-1zM444 253h1v1h-1zM445 253h1v1h-1zM446 252h1v2h-1zM447 253h1v1h-1zM448 253h1v1h-1zM449 253h1v1h-1zM450 252h1v2h-1zM451 252h1v2h-1zM452 252h1v2h-1zM453 251h1v3h-1zM454 253h1v1h-1zM455 251h1v3h-1zM456 250h1v4h-1zM457 253h1v1h-1zM458 250h1v4h-1zM459 252h1v2h-1zM460 253h1v1h-1zM461 253h1v1h-1zM462 252h1v2h-1zM463 250h1v4h-1zM464 253h1v1h-1zM465 252h1v2h-1zM466 251h1v3h-1zM467 251h1v3h-1zM468 250h1v4h-1zM469 253h1v1h-1zM470 252h1v2h-1zM471 253h1v1h-1zM472 252h1v2h-1zM473 251h1v3h-1zM474 252h1v2h-1zM475 252h1v2h-1zM476 253h1v1h-1zM477 251h1v3h-1zM478 247h1v7h-1zM479 252h1v2h-1zM480 251h1v3h-1zM481 253h1v1h-1zM482 250h1v4h-1zM483 251h1v3h-1zM484 253h1v1h-1zM485 253h1v1h-1zM486 253h1v1h-1zM487 252h1v2h-1zM488 251h1v3h-1zM489 253h1v1h-1zM490 253h1v1h-1zM491 251h1v3h-1zM492 253h1v1h-1zM493 251h1v3h-1zM494 253h1v1h-1zM495 253h1v1h-1zM496 251h1v3h-1zM497 253h1v1h-1zM498 253h1v1h-1zM499 252h1v2h-1zM500 252h1v2h-1zM501 251h1v3h-1zM502 252h1v2h-1zM503 250h1v4h-1zM504 253h1v1h-1zM505 250h1v4h-1zM506 253h1v1h-1zM507 253h1v1h-1zM508 252h1v2h-1zM509 253h1v1h-1zM510 252h1v2h-1zM511 252h1v2h-1zM512 252h1v2h-1zM513 251h1v3h-1zM514 252h1v2h-1zM515 253h1v1h-1zM516 253h1v1h-1zM517 251h1v3h-1zM518 250h1v4h-1zM519 253h1v1h-1zM520 251h1v3h-1zM521 247h1v7h-1zM522 252h1v2h-1zM523 253h1v1h-1zM524 252h1v2h-1zM525 252h1v2h-1zM526 252h1v2h-1zM527 253h1v1h-1zM528 246h1v8h-1zM529 252h1v2h-1zM530 249h1v5h-1zM531 253h1v1h-1zM532 252h1v2h-1zM533 253h1v1h-1zM534 252h1v2h-1zM535 253h1v1h-1zM536 250h1v4h-1zM537 250h1v4h-1zM538 253h1v1h-1zM539 253h1v1h-1zM540 253h1v1h-1zM541 253h1v1h-1zM542 251h1v3h-1zM543 250h1v4h-1zM544 253h1v1h-1zM545 253h1v1h-1zM546 253h1v1h-1zM547 252h1v2h-1zM548 250h1v4h-1zM549 253h1v1h-1zM550 251h1v3h-1zM551 253h1v1h-1zM552 253h1v1h-1zM553 253h1v1h-1zM554 252h1v2h-1zM555 253h1v1h-1zM556 253h1v1h-1zM557 252h1v2h-1zM558 253h1v1h-1zM559 252h1v2h-1zM560 253h1v1h-1zM561 252h1v2h-1zM562 253h1v1h-1zM563 253h1v1h-1zM564 252h1v2h-1zM565 253h1v1h-1zM566 253h1v1h-1zM567 253h1v1h-1zM568 252h1v2h-1zM569 253h1v1h-1zM570 253h1v1h-1zM571 252h1v2h-1zM572 252h1v2h-1zM573 252h1v2h-1zM574 251h1v3h-1zM575 252h1v2h-1zM576 251h1v3h-1zM577 253h1v1h-1zM578 252h1v2h-1zM579 251h1v3h-1zM580 250h1v4h-1zM581 253h1v1h-1zM582 253h1v1h-1zM583 250h1v4h-1zM584 253h1v1h-1zM585 249h1v5h-1zM586 253h1v1h-1zM587 253h1v1h-1zM588 252h1v2h-1zM589 253h1v1h-1zM590 253h1v1h-1zM591 251h1v3h-1zM592 253h1v1h-1z" fill="#00C800"/>
<path d="M195 206h1v48h-1zM196 226h1v28h-1zM198 195h1v59h-1zM199 236h1v18h-1zM203 190h1v64h-1zM204 235h1v19h-1zM205 246h1v8h-1zM206 236h1v18h-1zM208 218h1v36h-1zM213 243h1v11h-1zM220 251h1v3h-1zM226 246h1v8h-1zM231 243h1v11h-1zM233 194h1v60h-1zM240 250h1v4h-1zM241 246h1v8h-1zM242 184h1v70h-1zM246 248h1v6h-1zM254 251h1v3h-1zM258 251h1v3h-1zM270 248h1v6h-1zM275 179h1v75h-1zM276 185h1v69h-1zM287 243h1v11h-1zM289 208h1v46h-1zM290 200h1v54h-1zM292 206h1v48h-1zM293 243h1v11h-1zM297 249h1v5h-1zM299 246h1v8h-1zM302 243h1v11h-1zM304 221h1v33h-1zM305 213h1v41h-1zM306 172h1v82h-1zM307 185h1v69h-1zM308 206h1v48h-1zM309 211h1v43h-1zM312 240h1v14h-1zM318 251h1v3h-1zM320 175h1v79h-1zM321 174h1v80h-1zM326 248h1v6h-1zM329 208h1v46h-1zM330 226h1v28h-1zM335 246h1v8h-1zM339 211h1v43h-1zM340 238h1v16h-1zM348 209h1v45h-1zM349 209h1v45h-1zM369 247h1v7h-1zM378 218h1v36h-1zM379 212h1v42h-1zM383 246h1v8h-1zM386 250h1v4h-1zM391 232h1v22h-1zM392 232h1v22h-1zM393 203h1v51h-1zM394 236h1v18h-1zM395 233h1v21h-1zM398 245h1v9h-1zM399 245h1v9h-1zM406 210h1v44h-1zM408 231h1v23h-1zM409 195h1v59h-1zM410 236h1v18h-1zM412 241h1v13h-1zM413 212h1v42h-1zM420 248h1v6h-1zM422 248h1v6h-1zM424 218h1v36h-1zM428 191h1v63h-1zM429 198h1v56h-1zM433 231h1v23h-1zM434 190h1v64h-1zM435 208h1v46h-1zM437 226h1v28h-1zM438 222h1v32h-1zM440 209h1v45h-1zM442 246h1v8h-1zM446 210h1v44h-1zM450 251h1v3h-1zM456 236h1v18h-1zM460 251h1v3h-1zM462 236h1v18h-1zM463 163h1v91h-1zM464 150h1v104h-1zM465 198h1v56h-1zM466 206h1v48h-1zM467 203h1v51h-1zM468 237h1v17h-1zM470 246h1v8h-1zM471 206h1v48h-1zM472 212h1v42h-1zM476 240h1v14h-1zM477 246h1v8h-1zM480 204h1v50h-1zM481 200h1v54h-1zM482 228h1v26h-1zM483 236h1v18h-1zM484 246h1v8h-1zM493 213h1v41h-1zM494 219h1v35h-1zM499 248h1v6h-1zM504 246h1v8h-1zM512 174h1v80h-1zM514 190h1v64h-1zM515 155h1v99h-1zM516 148h1v106h-1zM517 151h1v103h-1zM518 160h1v94h-1zM519 188h1v66h-1zM520 216h1v38h-1zM521 231h1v23h-1zM525 242h1v12h-1zM536 250h1v4h-1zM541 221h1v33h-1zM542 208h1v46h-1zM543 212h1v42h-1zM545 227h1v27h-1zM546 205h1v49h-1zM547 206h1v48h-1zM549 238h1v16h-1zM553 248h1v6h-1zM556 203h1v51h-1zM557 213h1v41h-1zM558 231h1v23h-1zM559 192h1v62h-1zM560 190h1v64h-1zM562 188h1v66h-1zM563 207h1v47h-1zM564 197h1v57h-1zM565 243h1v11h-1zM572 226h1v28h-1zM573 218h1v36h-1zM577 238h1v16h-1zM582 228h1v26h-1zM583 236h1v18h-1zM585 236h1v18h-1zM586 190h1v64h-1zM587 208h1v46h-1zM588 246h1v8h-1zM591 248h1v6h-1zM592 241h1v13h-1z" fill="#00C800"/>
<rect x="189" y="254" width="1" height="1" fill="#000000"/>
<rect x="233" y="254" width="1" height="1" fill="#000000"/>
<rect x="276" y="254" width="1" height="1" fill="#000000"/>
<rect x="319" y="254" width="1" height="1" fill="#000000"/>
<rect x="362" y="254" width="1" height="1" fill="#000000"/>
<rect x="406" y="254" width="1" height="1" fill="#000000"/>
<rect x="449" y="254" width="1" height="1" fill="#000000"/>
<rect x="492" y="254" width="1" height="1" fill="#000000"/>
<rect x="535" y="254" width="1" height="1" fill="#000000"/>
<rect x="578" y="254" width="1" height="1" fill="#000000"/>
<polyline points="190,240.5 202,240.5 202,239.5 218,239.5 218,238.5 235,238.5 235,237.5 251,237.5 251,236.5 270,236.5 270,235.5 290,235.5 290,234.5 311,234.5 311,233.5 333,233.5 333,232.5 356,232.5 356,231.5 381,231.5 381,230.5 406,230.5 406,229.5 433,229.5 433,228.5 461,228.5 461,227.5 488,227.5 488,226.5 519,226.5 519,225.5 550,225.5 550,224.5 583,224.5 583,223.5 593,223.5" fill="none" stroke="#8CCCF2" stroke-width="1"/>
<rect x="592" y="127" width="1" height="126" fill="#3CD0FF"/>
<rect x="189" y="127" width="435" height="1" fill="#000000"/>
<rect x="190" y="128" width="432" height="1" fill="#2A2A2A"/>
<rect x="189" y="127" width="1" height="127" fill="#000000"/>
<rect x="190" y="127" width="1" height="127" fill="#1A1A1A"/>
<rect x="622" y="127" width="2" height="127" fill="#000000"/>
<rect x="186" y="127" width="3" height="1" fill="#000"/>
<text x="168.6" y="131.5" font-size="11" fill="#000" stroke="#000" stroke-width="0.2" textLength="17.2" lengthAdjust="spacingAndGlyphs">600</text>
<rect x="186" y="149" width="3" height="1" fill="#000"/>
<text x="168.6" y="153.5" font-size="11" fill="#000" stroke="#000" stroke-width="0.2" textLength="17.2" lengthAdjust="spacingAndGlyphs">500</text>
<rect x="186" y="170" width="3" height="1" fill="#000"/>
<text x="168.6" y="174.5" font-size="11" fill="#000" stroke="#000" stroke-width="0.2" textLength="17.2" lengthAdjust="spacingAndGlyphs">400</text>
<rect x="186" y="191" width="3" height="1" fill="#000"/>
<text x="168.6" y="195.5" font-size="11" fill="#000" stroke="#000" stroke-width="0.2" textLength="17.2" lengthAdjust="spacingAndGlyphs">300</text>
<rect x="186" y="212" width="3" height="1" fill="#000"/>
<text x="168.6" y="216.5" font-size="11" fill="#000" stroke="#000" stroke-width="0.2" textLength="17.2" lengthAdjust="spacingAndGlyphs">200</text>
<rect x="186" y="233" width="3" height="1" fill="#000"/>
<text x="168.6" y="237.5" font-size="11" fill="#000" stroke="#000" stroke-width="0.2" textLength="17.2" lengthAdjust="spacingAndGlyphs">100</text>
<rect x="624" y="247" width="3" height="1" fill="#000"/>
<rect x="624" y="240" width="3" height="1" fill="#000"/>
<text x="627" y="244.5" font-size="11" fill="#000" stroke="#000" stroke-width="0.2" textLength="15.0" lengthAdjust="spacingAndGlyphs">2 X</text>
<rect x="624" y="233" width="3" height="1" fill="#000"/>
<rect x="624" y="226" width="3" height="1" fill="#000"/>
<text x="627" y="230.5" font-size="11" fill="#000" stroke="#000" stroke-width="0.2" textLength="15.0" lengthAdjust="spacingAndGlyphs">4 X</text>
<rect x="624" y="219" width="3" height="1" fill="#000"/>
<rect x="624" y="212" width="3" height="1" fill="#000"/>
<text x="627" y="216.5" font-size="11" fill="#000" stroke="#000" stroke-width="0.2" textLength="15.0" lengthAdjust="spacingAndGlyphs">6 X</text>
<rect x="624" y="205" width="3" height="1" fill="#000"/>
<rect x="624" y="198" width="3" height="1" fill="#000"/>
<text x="627" y="202.5" font-size="11" fill="#000" stroke="#000" stroke-width="0.2" textLength="15.0" lengthAdjust="spacingAndGlyphs">8 X</text>
<rect x="624" y="191" width="3" height="1" fill="#000"/>
<rect x="624" y="184" width="3" height="1" fill="#000"/>
<text x="627" y="188.5" font-size="11" fill="#000" stroke="#000" stroke-width="0.2" textLength="21.1" lengthAdjust="spacingAndGlyphs">10 X</text>
<rect x="624" y="177" width="3" height="1" fill="#000"/>
<rect x="624" y="170" width="3" height="1" fill="#000"/>
<text x="627" y="174.5" font-size="11" fill="#000" stroke="#000" stroke-width="0.2" textLength="21.1" lengthAdjust="spacingAndGlyphs">12 X</text>
<rect x="624" y="163" width="3" height="1" fill="#000"/>
<rect x="624" y="156" width="3" height="1" fill="#000"/>
<text x="627" y="160.5" font-size="11" fill="#000" stroke="#000" stroke-width="0.2" textLength="21.1" lengthAdjust="spacingAndGlyphs">14 X</text>
<rect x="624" y="149" width="3" height="1" fill="#000"/>
<rect x="624" y="142" width="3" height="1" fill="#000"/>
<text x="627" y="146.5" font-size="11" fill="#000" stroke="#000" stroke-width="0.2" textLength="21.1" lengthAdjust="spacingAndGlyphs">16 X</text>
<rect x="624" y="135" width="3" height="1" fill="#000"/>
<rect x="624" y="127" width="3" height="1" fill="#000"/>
<text x="627" y="131.5" font-size="11" fill="#000" stroke="#000" stroke-width="0.2" textLength="21.1" lengthAdjust="spacingAndGlyphs">18 X</text>
<text x="181.9" y="264" font-size="11" fill="#000" stroke="#000" stroke-width="0.2" textLength="14.5" lengthAdjust="spacingAndGlyphs">0.0</text>
<text x="225.1" y="264" font-size="11" fill="#000" stroke="#000" stroke-width="0.2" textLength="14.5" lengthAdjust="spacingAndGlyphs">2.5</text>
<text x="268.3" y="264" font-size="11" fill="#000" stroke="#000" stroke-width="0.2" textLength="14.5" lengthAdjust="spacingAndGlyphs">5.0</text>
<text x="311.6" y="264" font-size="11" fill="#000" stroke="#000" stroke-width="0.2" textLength="14.5" lengthAdjust="spacingAndGlyphs">7.5</text>
<text x="351.8" y="264" font-size="11" fill="#000" stroke="#000" stroke-width="0.2" textLength="20.5" lengthAdjust="spacingAndGlyphs">10.0</text>
<text x="395.0" y="264" font-size="11" fill="#000" stroke="#000" stroke-width="0.2" textLength="20.5" lengthAdjust="spacingAndGlyphs">12.5</text>
<text x="438.2" y="264" font-size="11" fill="#000" stroke="#000" stroke-width="0.2" textLength="20.5" lengthAdjust="spacingAndGlyphs">15.0</text>
<text x="481.5" y="264" font-size="11" fill="#000" stroke="#000" stroke-width="0.2" textLength="20.5" lengthAdjust="spacingAndGlyphs">17.5</text>
<text x="524.7" y="264" font-size="11" fill="#000" stroke="#000" stroke-width="0.2" textLength="20.5" lengthAdjust="spacingAndGlyphs">20.0</text>
<text x="567.9" y="264" font-size="11" fill="#000" stroke="#000" stroke-width="0.2" textLength="20.5" lengthAdjust="spacingAndGlyphs">22.5</text>
<text x="602.0" y="264" font-size="11" fill="#000" stroke="#000" stroke-width="0.2" textLength="20.0" lengthAdjust="spacingAndGlyphs">25.0</text>
<text x="626" y="264" font-size="11" fill="#000" stroke="#000" stroke-width="0.2" textLength="14.0" lengthAdjust="spacingAndGlyphs">GB</text>
<rect x="191" y="117" width="6" height="8" fill="#007800" />
<text x="200.4" y="124.8" font-size="11" fill="#000" stroke="#000" stroke-width="0.2" textLength="19.1" lengthAdjust="spacingAndGlyphs">LDC</text>
<rect x="223" y="117" width="6" height="8" fill="#80CFF8" />
<text x="232.4" y="124.8" font-size="11" fill="#000" stroke="#000" stroke-width="0.2" textLength="56.6" lengthAdjust="spacingAndGlyphs">Read speed</text>
<rect x="293" y="117" width="6" height="8" fill="#F890F0" />
<text x="301.7" y="124.8" font-size="11" fill="#000" stroke="#000" stroke-width="0.2" textLength="57.8" lengthAdjust="spacingAndGlyphs">Write speed</text>
<rect x="190" y="283" width="432" height="127" fill="url(#plot)" />
<rect x="198" y="283" width="1" height="127" fill="#4E4E4E"/>
<rect x="207" y="283" width="1" height="127" fill="#4E4E4E"/>
<rect x="215" y="283" width="1" height="127" fill="#4E4E4E"/>
<rect x="224" y="283" width="1" height="127" fill="#4E4E4E"/>
<rect x="241" y="283" width="1" height="127" fill="#4E4E4E"/>
<rect x="250" y="283" width="1" height="127" fill="#4E4E4E"/>
<rect x="259" y="283" width="1" height="127" fill="#4E4E4E"/>
<rect x="267" y="283" width="1" height="127" fill="#4E4E4E"/>
<rect x="285" y="283" width="1" height="127" fill="#4E4E4E"/>
<rect x="293" y="283" width="1" height="127" fill="#4E4E4E"/>
<rect x="302" y="283" width="1" height="127" fill="#4E4E4E"/>
<rect x="310" y="283" width="1" height="127" fill="#4E4E4E"/>
<rect x="328" y="283" width="1" height="127" fill="#4E4E4E"/>
<rect x="336" y="283" width="1" height="127" fill="#4E4E4E"/>
<rect x="345" y="283" width="1" height="127" fill="#4E4E4E"/>
<rect x="354" y="283" width="1" height="127" fill="#4E4E4E"/>
<rect x="371" y="283" width="1" height="127" fill="#4E4E4E"/>
<rect x="380" y="283" width="1" height="127" fill="#4E4E4E"/>
<rect x="388" y="283" width="1" height="127" fill="#4E4E4E"/>
<rect x="397" y="283" width="1" height="127" fill="#4E4E4E"/>
<rect x="414" y="283" width="1" height="127" fill="#4E4E4E"/>
<rect x="423" y="283" width="1" height="127" fill="#4E4E4E"/>
<rect x="432" y="283" width="1" height="127" fill="#4E4E4E"/>
<rect x="440" y="283" width="1" height="127" fill="#4E4E4E"/>
<rect x="457" y="283" width="1" height="127" fill="#4E4E4E"/>
<rect x="466" y="283" width="1" height="127" fill="#4E4E4E"/>
<rect x="475" y="283" width="1" height="127" fill="#4E4E4E"/>
<rect x="483" y="283" width="1" height="127" fill="#4E4E4E"/>
<rect x="501" y="283" width="1" height="127" fill="#4E4E4E"/>
<rect x="509" y="283" width="1" height="127" fill="#4E4E4E"/>
<rect x="518" y="283" width="1" height="127" fill="#4E4E4E"/>
<rect x="527" y="283" width="1" height="127" fill="#4E4E4E"/>
<rect x="544" y="283" width="1" height="127" fill="#4E4E4E"/>
<rect x="553" y="283" width="1" height="127" fill="#4E4E4E"/>
<rect x="561" y="283" width="1" height="127" fill="#4E4E4E"/>
<rect x="570" y="283" width="1" height="127" fill="#4E4E4E"/>
<rect x="587" y="283" width="1" height="127" fill="#4E4E4E"/>
<rect x="596" y="283" width="1" height="127" fill="#4E4E4E"/>
<rect x="604" y="283" width="1" height="127" fill="#4E4E4E"/>
<rect x="613" y="283" width="1" height="127" fill="#4E4E4E"/>
<rect x="233" y="283" width="1" height="127" fill="#242424"/>
<rect x="276" y="283" width="1" height="127" fill="#242424"/>
<rect x="319" y="283" width="1" height="127" fill="#242424"/>
<rect x="362" y="283" width="1" height="127" fill="#242424"/>
<rect x="406" y="283" width="1" height="127" fill="#242424"/>
<rect x="449" y="283" width="1" height="127" fill="#242424"/>
<rect x="492" y="283" width="1" height="127" fill="#242424"/>
<rect x="535" y="283" width="1" height="127" fill="#242424"/>
<rect x="578" y="283" width="1" height="127" fill="#242424"/>
<rect x="190" y="397" width="432" height="1" fill="#1E1E1E"/>
<rect x="190" y="384" width="432" height="1" fill="#1E1E1E"/>
<rect x="190" y="372" width="432" height="1" fill="#1E1E1E"/>
<rect x="190" y="359" width="432" height="1" fill="#1E1E1E"/>
<rect x="190" y="347" width="432" height="1" fill="#1E1E1E"/>
<rect x="190" y="334" width="432" height="1" fill="#1E1E1E"/>
<rect x="190" y="322" width="432" height="1" fill="#1E1E1E"/>
<rect x="190" y="309" width="432" height="1" fill="#1E1E1E"/>
<rect x="190" y="297" width="432" height="1" fill="#1E1E1E"/>
<rect x="189" y="409" width="435" height="1" fill="#000000"/>
<path d="M190 397h1v13h-1zM191 397h1v13h-1zM192 397h1v13h-1zM193 397h1v13h-1zM194 397h1v13h-1zM196 397h1v13h-1zM197 397h1v13h-1zM198 397h1v13h-1zM199 397h1v13h-1zM200 397h1v13h-1zM201 397h1v13h-1zM202 397h1v13h-1zM203 397h1v13h-1zM204 397h1v13h-1zM205 397h1v13h-1zM206 397h1v13h-1zM207 397h1v13h-1zM209 397h1v13h-1zM210 397h1v13h-1zM211 397h1v13h-1zM212 397h1v13h-1zM213 397h1v13h-1zM214 397h1v13h-1zM215 397h1v13h-1zM216 397h1v13h-1zM217 397h1v13h-1zM218 397h1v13h-1zM219 397h1v13h-1zM220 397h1v13h-1zM221 397h1v13h-1zM222 397h1v13h-1zM224 397h1v13h-1zM225 397h1v13h-1zM226 397h1v13h-1zM227 397h1v13h-1zM228 397h1v13h-1zM229 397h1v13h-1zM230 397h1v13h-1zM231 397h1v13h-1zM232 397h1v13h-1zM233 397h1v13h-1zM234 397h1v13h-1zM235 397h1v13h-1zM237 397h1v13h-1zM238 397h1v13h-1zM239 397h1v13h-1zM241 397h1v13h-1zM242 397h1v13h-1zM243 397h1v13h-1zM244 397h1v13h-1zM245 397h1v13h-1zM246 397h1v13h-1zM247 397h1v13h-1zM248 397h1v13h-1zM250 397h1v13h-1zM251 397h1v13h-1zM252 397h1v13h-1zM253 397h1v13h-1zM254 397h1v13h-1zM256 397h1v13h-1zM257 397h1v13h-1zM258 397h1v13h-1zM259 397h1v13h-1zM260 397h1v13h-1zM261 397h1v13h-1zM262 397h1v13h-1zM264 397h1v13h-1zM265 397h1v13h-1zM266 397h1v13h-1zM267 397h1v13h-1zM268 397h1v13h-1zM269 397h1v13h-1zM271 397h1v13h-1zM272 397h1v13h-1zM273 397h1v13h-1zM275 397h1v13h-1zM276 397h1v13h-1zM277 397h1v13h-1zM278 397h1v13h-1zM279 397h1v13h-1zM280 397h1v13h-1zM282 397h1v13h-1zM283 397h1v13h-1zM284 397h1v13h-1zM286 397h1v13h-1zM287 397h1v13h-1zM288 397h1v13h-1zM289 397h1v13h-1zM290 397h1v13h-1zM291 397h1v13h-1zM292 397h1v13h-1zM293 397h1v13h-1zM295 397h1v13h-1zM296 397h1v13h-1zM297 397h1v13h-1zM299 397h1v13h-1zM300 397h1v13h-1zM301 397h1v13h-1zM303 397h1v13h-1zM304 397h1v13h-1zM305 397h1v13h-1zM306 397h1v13h-1zM307 397h1v13h-1zM308 397h1v13h-1zM309 397h1v13h-1zM311 397h1v13h-1zM312 397h1v13h-1zM313 397h1v13h-1zM314 397h1v13h-1zM315 397h1v13h-1zM317 397h1v13h-1zM318 397h1v13h-1zM320 397h1v13h-1zM321 397h1v13h-1zM322 397h1v13h-1zM323 397h1v13h-1zM324 397h1v13h-1zM325 397h1v13h-1zM327 397h1v13h-1zM328 397h1v13h-1zM329 397h1v13h-1zM330 397h1v13h-1zM331 397h1v13h-1zM333 397h1v13h-1zM335 397h1v13h-1zM336 397h1v13h-1zM337 397h1v13h-1zM338 397h1v13h-1zM339 397h1v13h-1zM340 397h1v13h-1zM341 397h1v13h-1zM342 397h1v13h-1zM343 397h1v13h-1zM345 397h1v13h-1zM346 397h1v13h-1zM347 397h1v13h-1zM348 397h1v13h-1zM350 397h1v13h-1zM351 397h1v13h-1zM352 397h1v13h-1zM353 397h1v13h-1zM354 397h1v13h-1zM355 397h1v13h-1zM356 397h1v13h-1zM357 397h1v13h-1zM359 397h1v13h-1zM360 397h1v13h-1zM361 397h1v13h-1zM362 397h1v13h-1zM363 397h1v13h-1zM364 397h1v13h-1zM365 397h1v13h-1zM366 397h1v13h-1zM367 397h1v13h-1zM368 397h1v13h-1zM369 397h1v13h-1zM370 397h1v13h-1zM371 397h1v13h-1zM372 397h1v13h-1zM373 397h1v13h-1zM374 397h1v13h-1zM375 397h1v13h-1zM376 397h1v13h-1zM378 397h1v13h-1zM379 397h1v13h-1zM380 397h1v13h-1zM381 397h1v13h-1zM382 397h1v13h-1zM383 397h1v13h-1zM384 397h1v13h-1zM386 397h1v13h-1zM387 397h1v13h-1zM388 397h1v13h-1zM389 397h1v13h-1zM391 397h1v13h-1zM392 397h1v13h-1zM393 397h1v13h-1zM394 397h1v13h-1zM395 397h1v13h-1zM396 397h1v13h-1zM398 397h1v13h-1zM399 397h1v13h-1zM400 397h1v13h-1zM401 397h1v13h-1zM402 397h1v13h-1zM403 397h1v13h-1zM404 397h1v13h-1zM405 397h1v13h-1zM407 397h1v13h-1zM408 397h1v13h-1zM409 397h1v13h-1zM410 397h1v13h-1zM411 397h1v13h-1zM412 397h1v13h-1zM413 397h1v13h-1zM414 397h1v13h-1zM415 397h1v13h-1zM416 397h1v13h-1zM417 397h1v13h-1zM418 397h1v13h-1zM419 397h1v13h-1zM420 397h1v13h-1zM421 397h1v13h-1zM422 397h1v13h-1zM423 397h1v13h-1zM424 397h1v13h-1zM425 397h1v13h-1zM428 397h1v13h-1zM429 397h1v13h-1zM431 397h1v13h-1zM432 397h1v13h-1zM433 397h1v13h-1zM434 397h1v13h-1zM435 397h1v13h-1zM436 397h1v13h-1zM437 397h1v13h-1zM438 397h1v13h-1zM439 397h1v13h-1zM440 397h1v13h-1zM441 397h1v13h-1zM442 397h1v13h-1zM443 397h1v13h-1zM444 397h1v13h-1zM445 397h1v13h-1zM446 397h1v13h-1zM447 397h1v13h-1zM448 397h1v13h-1zM449 397h1v13h-1zM450 397h1v13h-1zM451 397h1v13h-1zM452 397h1v13h-1zM453 397h1v13h-1zM454 397h1v13h-1zM455 397h1v13h-1zM456 397h1v13h-1zM457 397h1v13h-1zM458 397h1v13h-1zM460 397h1v13h-1zM461 397h1v13h-1zM463 397h1v13h-1zM464 397h1v13h-1zM465 397h1v13h-1zM466 397h1v13h-1zM467 397h1v13h-1zM468 397h1v13h-1zM469 397h1v13h-1zM470 397h1v13h-1zM471 397h1v13h-1zM472 397h1v13h-1zM473 397h1v13h-1zM475 397h1v13h-1zM476 397h1v13h-1zM477 397h1v13h-1zM478 397h1v13h-1zM479 397h1v13h-1zM480 397h1v13h-1zM481 397h1v13h-1zM482 397h1v13h-1zM483 397h1v13h-1zM484 397h1v13h-1zM485 397h1v13h-1zM486 397h1v13h-1zM487 397h1v13h-1zM488 397h1v13h-1zM489 397h1v13h-1zM490 397h1v13h-1zM491 397h1v13h-1zM492 397h1v13h-1zM493 397h1v13h-1zM494 397h1v13h-1zM495 397h1v13h-1zM496 397h1v13h-1zM497 397h1v13h-1zM499 397h1v13h-1zM500 397h1v13h-1zM501 397h1v13h-1zM502 397h1v13h-1zM503 397h1v13h-1zM504 397h1v13h-1zM505 397h1v13h-1zM506 397h1v13h-1zM507 397h1v13h-1zM509 397h1v13h-1zM510 397h1v13h-1zM511 397h1v13h-1zM512 397h1v13h-1zM514 397h1v13h-1zM515 397h1v13h-1zM516 397h1v13h-1zM517 397h1v13h-1zM518 397h1v13h-1zM519 397h1v13h-1zM520 397h1v13h-1zM521 397h1v13h-1zM522 397h1v13h-1zM523 397h1v13h-1zM524 397h1v13h-1zM526 397h1v13h-1zM527 397h1v13h-1zM528 397h1v13h-1zM529 397h1v13h-1zM530 397h1v13h-1zM531 397h1v13h-1zM532 397h1v13h-1zM533 397h1v13h-1zM534 397h1v13h-1zM535 397h1v13h-1zM537 397h1v13h-1zM539 397h1v13h-1zM540 397h1v13h-1zM541 397h1v13h-1zM542 397h1v13h-1zM543 397h1v13h-1zM544 397h1v13h-1zM545 397h1v13h-1zM546 397h1v13h-1zM547 397h1v13h-1zM548 397h1v13h-1zM549 397h1v13h-1zM550 397h1v13h-1zM552 397h1v13h-1zM553 397h1v13h-1zM554 397h1v13h-1zM555 397h1v13h-1zM556 397h1v13h-1zM558 397h1v13h-1zM559 397h1v13h-1zM560 397h1v13h-1zM561 397h1v13h-1zM562 397h1v13h-1zM563 397h1v13h-1zM564 397h1v13h-1zM565 397h1v13h-1zM566 397h1v13h-1zM567 397h1v13h-1zM568 397h1v13h-1zM569 397h1v13h-1zM570 397h1v13h-1zM571 397h1v13h-1zM572 397h1v13h-1zM574 397h1v13h-1zM576 397h1v13h-1zM577 397h1v13h-1zM578 397h1v13h-1zM579 397h1v13h-1zM581 397h1v13h-1zM582 397h1v13h-1zM583 397h1v13h-1zM584 397h1v13h-1zM585 397h1v13h-1zM586 397h1v13h-1zM587 397h1v13h-1zM588 397h1v13h-1zM589 397h1v13h-1zM590 397h1v13h-1zM591 397h1v13h-1zM592 397h1v13h-1z" fill="#00C800"/>
<path d="M195 347h1v50h-1zM196 372h1v25h-1zM198 334h1v63h-1zM203 322h1v75h-1zM204 384h1v13h-1zM205 384h1v13h-1zM208 372h1v25h-1zM231 384h1v13h-1zM233 347h1v50h-1zM242 322h1v75h-1zM275 322h1v75h-1zM276 334h1v63h-1zM289 359h1v38h-1zM290 347h1v50h-1zM292 359h1v38h-1zM302 384h1v13h-1zM304 359h1v38h-1zM306 309h1v88h-1zM307 334h1v63h-1zM308 359h1v38h-1zM309 359h1v38h-1zM312 384h1v13h-1zM320 384h1v13h-1zM321 309h1v88h-1zM322 322h1v75h-1zM329 359h1v38h-1zM339 347h1v50h-1zM348 359h1v38h-1zM349 359h1v38h-1zM379 359h1v38h-1zM391 384h1v13h-1zM393 347h1v50h-1zM394 372h1v25h-1zM395 384h1v13h-1zM406 359h1v38h-1zM408 384h1v13h-1zM409 334h1v63h-1zM410 384h1v13h-1zM412 384h1v13h-1zM413 359h1v38h-1zM424 359h1v38h-1zM428 322h1v75h-1zM429 347h1v50h-1zM433 372h1v25h-1zM434 334h1v63h-1zM435 372h1v25h-1zM438 372h1v25h-1zM440 359h1v38h-1zM446 359h1v38h-1zM456 372h1v25h-1zM462 384h1v13h-1zM463 297h1v100h-1zM464 283h1v114h-1zM465 347h1v50h-1zM466 347h1v50h-1zM467 347h1v50h-1zM472 359h1v38h-1zM476 384h1v13h-1zM481 347h1v50h-1zM482 347h1v50h-1zM484 384h1v13h-1zM494 347h1v50h-1zM513 309h1v88h-1zM514 334h1v63h-1zM515 297h1v100h-1zM516 283h1v114h-1zM517 283h1v114h-1zM518 297h1v100h-1zM519 309h1v88h-1zM520 334h1v63h-1zM521 359h1v38h-1zM522 372h1v25h-1zM542 372h1v25h-1zM543 359h1v38h-1zM544 359h1v38h-1zM546 359h1v38h-1zM548 359h1v38h-1zM556 347h1v50h-1zM559 334h1v63h-1zM560 347h1v50h-1zM561 322h1v75h-1zM563 347h1v50h-1zM564 322h1v75h-1zM566 384h1v13h-1zM572 347h1v50h-1zM573 359h1v38h-1zM576 384h1v13h-1zM578 384h1v13h-1zM582 372h1v25h-1zM584 372h1v25h-1zM586 334h1v63h-1z" fill="#6CD000"/>
<path d="M195 397h1v13h-1zM196 397h1v13h-1zM198 397h1v13h-1zM203 397h1v13h-1zM204 397h1v13h-1zM205 397h1v13h-1zM208 397h1v13h-1zM231 397h1v13h-1zM233 397h1v13h-1zM242 397h1v13h-1zM275 397h1v13h-1zM276 397h1v13h-1zM289 397h1v13h-1zM290 397h1v13h-1zM292 397h1v13h-1zM302 397h1v13h-1zM304 397h1v13h-1zM306 397h1v13h-1zM307 397h1v13h-1zM308 397h1v13h-1zM309 397h1v13h-1zM312 397h1v13h-1zM320 397h1v13h-1zM321 397h1v13h-1zM322 397h1v13h-1zM329 397h1v13h-1zM339 397h1v13h-1zM348 397h1v13h-1zM349 397h1v13h-1zM379 397h1v13h-1zM391 397h1v13h-1zM393 397h1v13h-1zM394 397h1v13h-1zM395 397h1v13h-1zM406 397h1v13h-1zM408 397h1v13h-1zM409 397h1v13h-1zM410 397h1v13h-1zM412 397h1v13h-1zM413 397h1v13h-1zM424 397h1v13h-1zM428 397h1v13h-1zM429 397h1v13h-1zM433 397h1v13h-1zM434 397h1v13h-1zM435 397h1v13h-1zM438 397h1v13h-1zM440 397h1v13h-1zM446 397h1v13h-1zM456 397h1v13h-1zM462 397h1v13h-1zM463 397h1v13h-1zM464 397h1v13h-1zM465 397h1v13h-1zM466 397h1v13h-1zM467 397h1v13h-1zM472 397h1v13h-1zM476 397h1v13h-1zM481 397h1v13h-1zM482 397h1v13h-1zM484 397h1v13h-1zM494 397h1v13h-1zM513 397h1v13h-1zM514 397h1v13h-1zM515 397h1v13h-1zM516 397h1v13h-1zM517 397h1v13h-1zM518 397h1v13h-1zM519 397h1v13h-1zM520 397h1v13h-1zM521 397h1v13h-1zM522 397h1v13h-1zM542 397h1v13h-1zM543 397h1v13h-1zM544 397h1v13h-1zM546 397h1v13h-1zM548 397h1v13h-1zM556 397h1v13h-1zM559 397h1v13h-1zM560 397h1v13h-1zM561 397h1v13h-1zM563 397h1v13h-1zM564 397h1v13h-1zM566 397h1v13h-1zM572 397h1v13h-1zM573 397h1v13h-1zM576 397h1v13h-1zM578 397h1v13h-1zM582 397h1v13h-1zM584 397h1v13h-1zM586 397h1v13h-1z" fill="#40CC00"/>
<rect x="592" y="283" width="1" height="127" fill="#3CD0FF"/>
<rect x="190" y="410" width="400" height="1" fill="#E8B0E8"/>
<rect x="189" y="283" width="435" height="1" fill="#000000"/>
<rect x="190" y="284" width="432" height="1" fill="#2A2A2A"/>
<rect x="189" y="283" width="1" height="127" fill="#000000"/>
<rect x="190" y="283" width="1" height="127" fill="#1A1A1A"/>
<rect x="622" y="283" width="2" height="127" fill="#000000"/>
<rect x="186" y="397" width="3" height="1" fill="#000"/>
<text x="180.2" y="401.5" font-size="11" fill="#000" stroke="#000" stroke-width="0.2" textLength="5.6" lengthAdjust="spacingAndGlyphs">1</text>
<rect x="186" y="384" width="3" height="1" fill="#000"/>
<text x="180.2" y="388.5" font-size="11" fill="#000" stroke="#000" stroke-width="0.2" textLength="5.6" lengthAdjust="spacingAndGlyphs">2</text>
<rect x="186" y="372" width="3" height="1" fill="#000"/>
<text x="180.2" y="376.5" font-size="11" fill="#000" stroke="#000" stroke-width="0.2" textLength="5.6" lengthAdjust="spacingAndGlyphs">3</text>
<rect x="186" y="359" width="3" height="1" fill="#000"/>
<text x="180.2" y="363.5" font-size="11" fill="#000" stroke="#000" stroke-width="0.2" textLength="5.6" lengthAdjust="spacingAndGlyphs">4</text>
<rect x="186" y="347" width="3" height="1" fill="#000"/>
<text x="180.2" y="351.5" font-size="11" fill="#000" stroke="#000" stroke-width="0.2" textLength="5.6" lengthAdjust="spacingAndGlyphs">5</text>
<rect x="186" y="334" width="3" height="1" fill="#000"/>
<text x="180.2" y="338.5" font-size="11" fill="#000" stroke="#000" stroke-width="0.2" textLength="5.6" lengthAdjust="spacingAndGlyphs">6</text>
<rect x="186" y="322" width="3" height="1" fill="#000"/>
<text x="180.2" y="326.5" font-size="11" fill="#000" stroke="#000" stroke-width="0.2" textLength="5.6" lengthAdjust="spacingAndGlyphs">7</text>
<rect x="186" y="309" width="3" height="1" fill="#000"/>
<text x="180.2" y="313.5" font-size="11" fill="#000" stroke="#000" stroke-width="0.2" textLength="5.6" lengthAdjust="spacingAndGlyphs">8</text>
<rect x="186" y="297" width="3" height="1" fill="#000"/>
<text x="180.2" y="301.5" font-size="11" fill="#000" stroke="#000" stroke-width="0.2" textLength="5.6" lengthAdjust="spacingAndGlyphs">9</text>
<rect x="186" y="283" width="3" height="1" fill="#000"/>
<text x="175.2" y="287.5" font-size="11" fill="#000" stroke="#000" stroke-width="0.2" textLength="10.6" lengthAdjust="spacingAndGlyphs">10</text>
<text x="626.6" y="287.4" font-size="11" fill="#000" stroke="#000" stroke-width="0.2" textLength="21.0" lengthAdjust="spacingAndGlyphs">10%</text>
<text x="626.6" y="313.4" font-size="11" fill="#000" stroke="#000" stroke-width="0.2" textLength="15.0" lengthAdjust="spacingAndGlyphs">8%</text>
<text x="626.6" y="338.4" font-size="11" fill="#000" stroke="#000" stroke-width="0.2" textLength="15.0" lengthAdjust="spacingAndGlyphs">6%</text>
<text x="626.6" y="363.4" font-size="11" fill="#000" stroke="#000" stroke-width="0.2" textLength="15.0" lengthAdjust="spacingAndGlyphs">4%</text>
<text x="626.6" y="388.4" font-size="11" fill="#000" stroke="#000" stroke-width="0.2" textLength="15.0" lengthAdjust="spacingAndGlyphs">2%</text>
<text x="181.9" y="420" font-size="11" fill="#000" stroke="#000" stroke-width="0.2" textLength="14.5" lengthAdjust="spacingAndGlyphs">0.0</text>
<text x="225.1" y="420" font-size="11" fill="#000" stroke="#000" stroke-width="0.2" textLength="14.5" lengthAdjust="spacingAndGlyphs">2.5</text>
<text x="268.3" y="420" font-size="11" fill="#000" stroke="#000" stroke-width="0.2" textLength="14.5" lengthAdjust="spacingAndGlyphs">5.0</text>
<text x="311.6" y="420" font-size="11" fill="#000" stroke="#000" stroke-width="0.2" textLength="14.5" lengthAdjust="spacingAndGlyphs">7.5</text>
<text x="351.8" y="420" font-size="11" fill="#000" stroke="#000" stroke-width="0.2" textLength="20.5" lengthAdjust="spacingAndGlyphs">10.0</text>
<text x="395.0" y="420" font-size="11" fill="#000" stroke="#000" stroke-width="0.2" textLength="20.5" lengthAdjust="spacingAndGlyphs">12.5</text>
<text x="438.2" y="420" font-size="11" fill="#000" stroke="#000" stroke-width="0.2" textLength="20.5" lengthAdjust="spacingAndGlyphs">15.0</text>
<text x="481.5" y="420" font-size="11" fill="#000" stroke="#000" stroke-width="0.2" textLength="20.5" lengthAdjust="spacingAndGlyphs">17.5</text>
<text x="524.7" y="420" font-size="11" fill="#000" stroke="#000" stroke-width="0.2" textLength="20.5" lengthAdjust="spacingAndGlyphs">20.0</text>
<text x="567.9" y="420" font-size="11" fill="#000" stroke="#000" stroke-width="0.2" textLength="20.5" lengthAdjust="spacingAndGlyphs">22.5</text>
<text x="602.0" y="420" font-size="11" fill="#000" stroke="#000" stroke-width="0.2" textLength="20.0" lengthAdjust="spacingAndGlyphs">25.0</text>
<text x="626" y="420" font-size="11" fill="#000" stroke="#000" stroke-width="0.2" textLength="14.0" lengthAdjust="spacingAndGlyphs">GB</text>
<rect x="191" y="273" width="6" height="8" fill="#007800" />
<text x="200.4" y="281" font-size="11" fill="#000" stroke="#000" stroke-width="0.2" textLength="15.4" lengthAdjust="spacingAndGlyphs">BIS</text>
<rect x="219" y="273" width="6" height="8" fill="#D8A0D8" />
<text x="227.6" y="281" font-size="11" fill="#000" stroke="#000" stroke-width="0.2" textLength="25.0" lengthAdjust="spacingAndGlyphs">Jitter</text>
<rect x="254" y="269" width="6" height="3" fill="#000" />
<text x="252.4" y="440.1" font-size="11.5" fill="#000" stroke="#000" stroke-width="0.2" textLength="19.2" lengthAdjust="spacingAndGlyphs">LDC</text>
<text x="310.2" y="440.1" font-size="11.5" fill="#000" stroke="#000" stroke-width="0.2" textLength="15.4" lengthAdjust="spacingAndGlyphs">BIS</text>
<text x="163.1" y="457.3" font-size="11.5" fill="#000" stroke="#000" stroke-width="0.2" textLength="19.0" lengthAdjust="spacingAndGlyphs">Avg</text>
<text x="163.1" y="472.8" font-size="11.5" fill="#000" stroke="#000" stroke-width="0.2" textLength="20.0" lengthAdjust="spacingAndGlyphs">Max</text>
<text x="161.5" y="488.5" font-size="11.5" fill="#000" stroke="#000" stroke-width="0.2" textLength="25.0" lengthAdjust="spacingAndGlyphs">Total</text>
<text x="252.5" y="456.8" font-size="11.5" fill="#1C1CFF" stroke="#1C1CFF" stroke-width="0.2" textLength="20.0" lengthAdjust="spacingAndGlyphs">3.15</text>
<text x="306.0" y="456.8" font-size="11.5" fill="#1C1CFF" stroke="#1C1CFF" stroke-width="0.2" textLength="20.7" lengthAdjust="spacingAndGlyphs">0.06</text>
<text x="255.8" y="472.7" font-size="11.5" fill="#1C1CFF" stroke="#1C1CFF" stroke-width="0.2" textLength="16.7" lengthAdjust="spacingAndGlyphs">508</text>
<text x="315.9" y="472.7" font-size="11.5" fill="#1C1CFF" stroke="#1C1CFF" stroke-width="0.2" textLength="10.6" lengthAdjust="spacingAndGlyphs">10</text>
<text x="230.8" y="488.2" font-size="11.5" fill="#1C1CFF" stroke="#1C1CFF" stroke-width="0.2" textLength="40.8" lengthAdjust="spacingAndGlyphs">1202848</text>
<text x="297.7" y="488.2" font-size="11.5" fill="#1C1CFF" stroke="#1C1CFF" stroke-width="0.2" textLength="29.0" lengthAdjust="spacingAndGlyphs">23042</text>
<rect x="395.5" y="430.5" width="12" height="12" fill="#FFFFFF" stroke="#333"/>
<path d="M397.2 436.4 L400 439.3 L405.6 433.2" fill="none" stroke="#333" stroke-width="1.2" shape-rendering="auto"/>
<text x="417" y="440.6" font-size="11.5" fill="#000" stroke="#000" stroke-width="0.2" textLength="24.8" lengthAdjust="spacingAndGlyphs">Jitter</text>
<text x="414.8" y="456.6" font-size="11.5" fill="#1C1CFF" stroke="#1C1CFF" stroke-width="0.2" textLength="27.0" lengthAdjust="spacingAndGlyphs">-0.1%</text>
<text x="418.3" y="472.7" font-size="11.5" fill="#1C1CFF" stroke="#1C1CFF" stroke-width="0.2" textLength="23.5" lengthAdjust="spacingAndGlyphs">0.0%</text>
<text x="461.4" y="444.8" font-size="11.5" fill="#000" stroke="#000" stroke-width="0.2" textLength="31.5" lengthAdjust="spacingAndGlyphs">Speed</text>
<text x="520" y="444.8" font-size="11.5" fill="#1C1CFF" stroke="#1C1CFF" stroke-width="0.2" textLength="29.5" lengthAdjust="spacingAndGlyphs">4.22 X</text>
<text x="461.4" y="472.6" font-size="11.5" fill="#000" stroke="#000" stroke-width="0.2" textLength="41.0" lengthAdjust="spacingAndGlyphs">Position</text>
<text x="520" y="472.6" font-size="11.5" fill="#1C1CFF" stroke="#1C1CFF" stroke-width="0.2" textLength="49.3" lengthAdjust="spacingAndGlyphs">23862 MB</text>
<text x="461.4" y="488.6" font-size="11.5" fill="#000" stroke="#000" stroke-width="0.2" textLength="40.5" lengthAdjust="spacingAndGlyphs">Samples</text>
<text x="520" y="488.6" font-size="11.5" fill="#1C1CFF" stroke="#1C1CFF" stroke-width="0.2" textLength="35.5" lengthAdjust="spacingAndGlyphs">381034</text>
<rect x="575.5" y="428.5" width="74" height="20" fill="#E5E5E5" stroke="#ADADAD"/>
<text x="579" y="443.5" font-size="12" fill="#000" stroke="#000" stroke-width="0.2" textLength="23.5" lengthAdjust="spacingAndGlyphs">4.2 X</text>
<path d="M636.5 436.8 L641 440.8 L645.5 436.8" fill="none" stroke="#404040" stroke-width="1" shape-rendering="auto"/>
<rect x="576.5" y="452.5" width="72" height="20" fill="#E1E1E1" stroke="#ADADAD"/>
<text x="590" y="467" font-size="12" fill="#000" stroke="#000" stroke-width="0.2" textLength="44.0" lengthAdjust="spacingAndGlyphs">Start full</text>
<rect x="575.5" y="479.5" width="72" height="20" fill="#E1E1E1" stroke="#ADADAD"/>
<text x="587" y="494" font-size="12" fill="#000" stroke="#000" stroke-width="0.2" textLength="47.0" lengthAdjust="spacingAndGlyphs">Start part</text>
<rect x="1" y="505" width="659" height="18" fill="#F0F0F0" />
<text x="3.6" y="518.6" font-size="12" fill="#000" stroke="#000" stroke-width="0.2" textLength="72.0" lengthAdjust="spacingAndGlyphs">Test completed</text>
<rect x="141" y="507" width="1" height="15" fill="#D8D8D8"/>
<rect x="146.5" y="508.5" width="301" height="12" fill="#E6E6E6" stroke="#D0C8D0"/>
<rect x="147" y="509" width="300" height="11" fill="#06B025" />
<rect x="450" y="507" width="1" height="15" fill="#D8D8D8"/>
<text x="455.1" y="518.5" font-size="12" fill="#000" stroke="#000" stroke-width="0.2" textLength="34.0" lengthAdjust="spacingAndGlyphs">100.0%</text>
<rect x="507" y="507" width="1" height="15" fill="#D8D8D8"/>
<text x="604.0" y="518.5" font-size="12" fill="#000" stroke="#000" stroke-width="0.2" textLength="24.0" lengthAdjust="spacingAndGlyphs">31:31</text>
<rect x="630" y="507" width="1" height="15" fill="#D8D8D8"/>
<rect x="656" y="513" width="2" height="2" fill="#A0A0A0" />
<rect x="653" y="516" width="2" height="2" fill="#A0A0A0" />
<rect x="656" y="516" width="2" height="2" fill="#A0A0A0" />
<rect x="650" y="519" width="2" height="2" fill="#A0A0A0" />
<rect x="653" y="519" width="2" height="2" fill="#A0A0A0" />
<rect x="656" y="519" width="2" height="2" fill="#A0A0A0" />
</svg>
</body></html>
